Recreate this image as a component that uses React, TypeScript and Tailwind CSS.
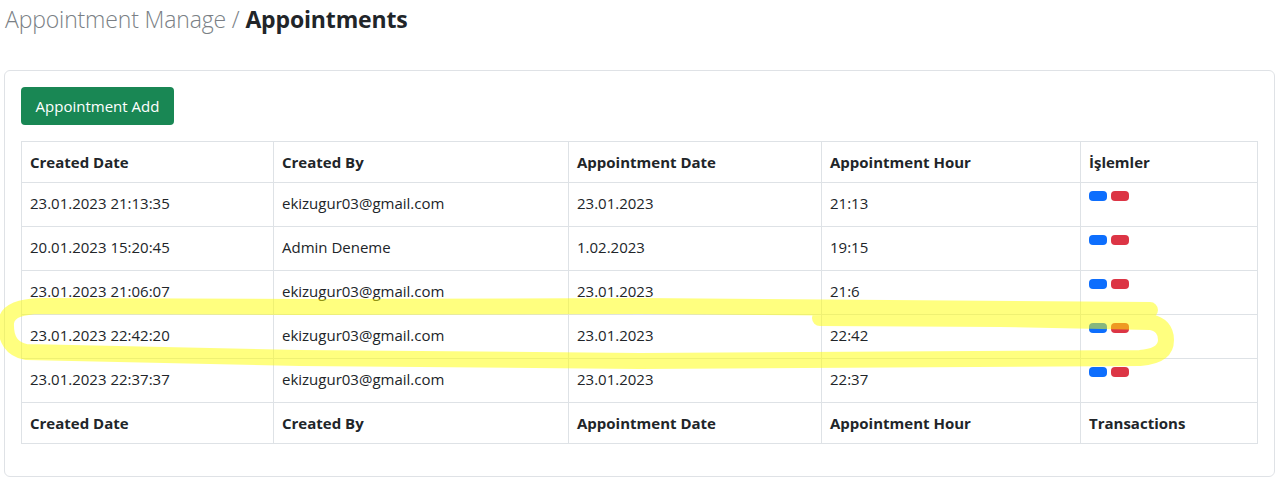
const rows = [
  { created: "23.01.2023 21:13:35", by: "ekizugur03@gmail.com", date: "23.01.2023", hour: "21:13" },
  { created: "20.01.2023 15:20:45", by: "Admin Deneme", date: "1.02.2023", hour: "19:15" },
  { created: "23.01.2023 21:06:07", by: "ekizugur03@gmail.com", date: "23.01.2023", hour: "21:6" },
  { created: "23.01.2023 22:42:20", by: "ekizugur03@gmail.com", date: "23.01.2023", hour: "22:42" },
  { created: "23.01.2023 22:37:37", by: "ekizugur03@gmail.com", date: "23.01.2023", hour: "22:37" },
];

function HeadRow({ last }: { last: string }) {
  return (
    <tr className="h-[41px] font-bold">
      <th className="w-[252px] border border-[#dee2e6] px-2 text-left">Created Date</th>
      <th className="w-[295px] border border-[#dee2e6] px-2 text-left">Created By</th>
      <th className="w-[253px] border border-[#dee2e6] px-2 text-left">Appointment Date</th>
      <th className="w-[259px] border border-[#dee2e6] px-2 text-left">Appointment Hour</th>
      <th className="border border-[#dee2e6] px-2 text-left">{last}</th>
    </tr>
  );
}

export default function App() {
  return (
    <div className="relative min-h-[499px] bg-white pl-[4px] text-[#212529]" style={{ fontFamily: '"Open Sans", "Noto Sans", sans-serif' }}>
      <h1 className="pl-px pt-[2px] text-[23px] leading-[34px] tracking-[-0.15px]">
        <span className="font-light text-[#7a7f85]">Appointment Manage / </span>
        <span className="font-bold text-[#212529]">Appointments</span>
      </h1>

      <div className="mt-[34px] rounded-md border border-[#dfe2e6] p-4">
        <button className="h-[38px] w-[153px] rounded bg-[#198754] text-[15px] text-white">Appointment Add</button>

        <table className="mb-4 mt-4 w-full table-fixed border-collapse text-[15px]">
          <thead>
            <HeadRow last="İşlemler" />
          </thead>
          <tbody>
            {rows.map((r) => (
              <tr key={r.created} className="h-[44px]">
                <td className="border border-[#dee2e6] px-2 pt-[9px] align-top">{r.created}</td>
                <td className="border border-[#dee2e6] px-2 pt-[9px] align-top">{r.by}</td>
                <td className="border border-[#dee2e6] px-2 pt-[9px] align-top">{r.date}</td>
                <td className="border border-[#dee2e6] px-2 pt-[9px] align-top">{r.hour}</td>
                <td className="border border-[#dee2e6] px-2 pt-[8px] align-top">
                  <div className="flex gap-1">
                    <button className="h-[10px] w-[18px] rounded bg-[#0d6efd]" />
                    <button className="h-[10px] w-[18px] rounded bg-[#dc3545]" />
                  </div>
                </td>
              </tr>
            ))}
          </tbody>
          <tfoot>
            <HeadRow last="Transactions" />
          </tfoot>
        </table>
      </div>

      <svg className="pointer-events-none absolute left-0 top-0" width="1275" height="499">
        <path
          d="M 1150 310 L 640 306 L 300 307 L 40 306 Q 7 307 6 323 Q 5 348 26 352 L 300 358 L 640 361 L 1140 358 Q 1166 356 1166 340 Q 1166 325 1150 322 L 1000 319 L 820 318"
          fill="none"
          stroke="#ffff00"
          strokeOpacity="0.5"
          strokeWidth="16"
          strokeLinecap="round"
          strokeLinejoin="round"
        />
      </svg>
    </div>
  );
}
